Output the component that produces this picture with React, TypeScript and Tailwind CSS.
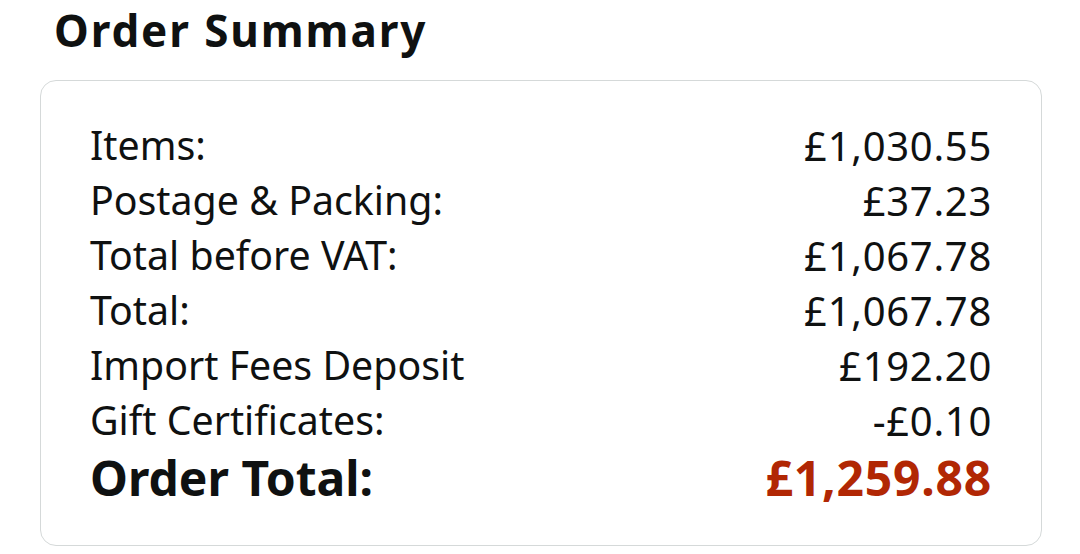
const rows = [
  { label: 'Items:', value: '£1,030.55' },
  { label: 'Postage & Packing:', value: '£37.23' },
  { label: 'Total before VAT:', value: '£1,067.78' },
  { label: 'Total:', value: '£1,067.78' },
  { label: 'Import Fees Deposit', value: '£192.20' },
  { label: 'Gift Certificates:', value: '-£0.10' },
];

export default function App() {
  return (
    <div
      className="w-[1080px] h-[554px] bg-white text-[#0f1111] overflow-hidden"
      style={{ fontFamily: '"Noto Sans", "Open Sans", sans-serif' }}
    >
      <h1 className="pl-[54px] text-[44px] leading-[60px] tracking-[1.9px] font-bold">Order Summary</h1>
      <div className="ml-[40px] mt-[20px] w-[1002px] rounded-[16px] border border-[#d5d9d9] px-[49px] pt-[37px] pb-[38px]">
        {rows.map((r) => (
          <div key={r.label} className="flex justify-between h-[55px] leading-[55px]">
            <span className="text-[39.3px]">{r.label}</span>
            <span className="text-[40px] tracking-[0.7px]">{r.value}</span>
          </div>
        ))}
        <div className="flex justify-between h-[59px] text-[48px] leading-[59px] font-bold">
          <span>Order Total:</span>
          <span className="text-[#b12704] tracking-[0.8px]">£1,259.88</span>
        </div>
      </div>
    </div>
  );
}
